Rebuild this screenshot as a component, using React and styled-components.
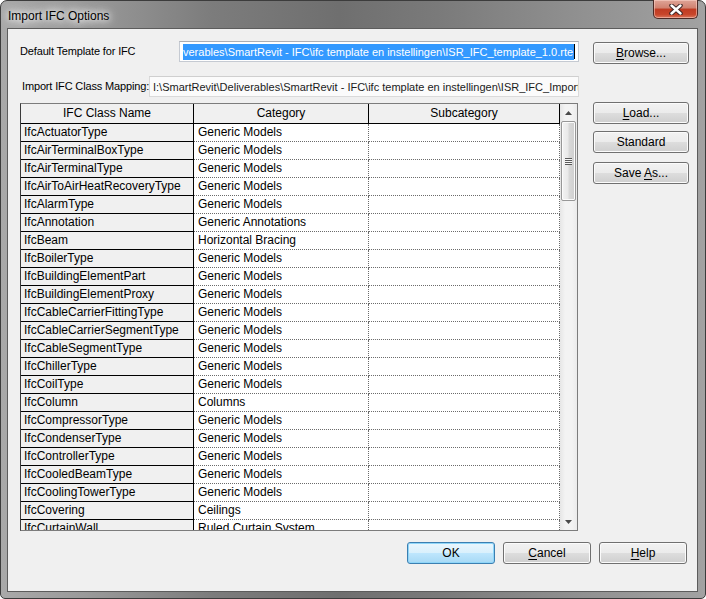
import React from 'react'
import styled, { createGlobalStyle } from 'styled-components'

const GlobalStyle = createGlobalStyle`
    body {
        margin: 0;
        background: #ffffff;
    }
`

const rows = [
    ['IfcActuatorType', 'Generic Models'],
    ['IfcAirTerminalBoxType', 'Generic Models'],
    ['IfcAirTerminalType', 'Generic Models'],
    ['IfcAirToAirHeatRecoveryType', 'Generic Models'],
    ['IfcAlarmType', 'Generic Models'],
    ['IfcAnnotation', 'Generic Annotations'],
    ['IfcBeam', 'Horizontal Bracing'],
    ['IfcBoilerType', 'Generic Models'],
    ['IfcBuildingElementPart', 'Generic Models'],
    ['IfcBuildingElementProxy', 'Generic Models'],
    ['IfcCableCarrierFittingType', 'Generic Models'],
    ['IfcCableCarrierSegmentType', 'Generic Models'],
    ['IfcCableSegmentType', 'Generic Models'],
    ['IfcChillerType', 'Generic Models'],
    ['IfcCoilType', 'Generic Models'],
    ['IfcColumn', 'Columns'],
    ['IfcCompressorType', 'Generic Models'],
    ['IfcCondenserType', 'Generic Models'],
    ['IfcControllerType', 'Generic Models'],
    ['IfcCooledBeamType', 'Generic Models'],
    ['IfcCoolingTowerType', 'Generic Models'],
    ['IfcCovering', 'Ceilings'],
    ['IfcCurtainWall', 'Ruled Curtain System'],
    ['IfcDamperType', 'Generic Models'],
]

// letter with access-key underline
const Key = ({ children }) => <u>{children}</u>

const CloseGlyph = () => (
    <svg width="14" height="11" viewBox="0 0 14 11">
        <path d="M2.5 1.5 L11.5 9.5 M11.5 1.5 L2.5 9.5" stroke="#3b2424" strokeWidth="4.4" strokeLinecap="round" />
        <path d="M2.5 1.5 L11.5 9.5 M11.5 1.5 L2.5 9.5" stroke="#ffffff" strokeWidth="2.4" strokeLinecap="round" />
    </svg>
)

const Arrow = ({ down }) => (
    <svg width="7" height="4" viewBox="0 0 7 4">
        <polygon points={down ? '0,0 7,0 3.5,4' : '0,4 7,4 3.5,0'} fill="#4a4a4a" />
    </svg>
)

const App = () => {
    return (
        <>
            <GlobalStyle />
            <StyledWindow>
                <TitleBar>
                    <TitleText>Import IFC Options</TitleText>
                    <CloseButton>
                        <CloseGlyph />
                    </CloseButton>
                </TitleBar>
                <Client>
                    <FieldRow>
                        <FieldLabel $w={159}>Default Template for IFC</FieldLabel>
                        <TextBox $w={400}>
                            <Selected>verables\SmartRevit - IFC\ifc template en instellingen\ISR_IFC_template_1.0.rte</Selected>
                            <Caret />
                        </TextBox>
                        <DialogButton $w={96} $ml={14} $mt={1}>
                            <span>
                                <Key>B</Key>rowse...
                            </span>
                        </DialogButton>
                    </FieldRow>

                    <FieldRow $mt={12}>
                        <FieldLabel $w={129} $pl={2}>
                            Import IFC Class Mapping:
                        </FieldLabel>
                        <TextBox $w={430} $readOnly>
                            I:\SmartRevit\Deliverables\SmartRevit - IFC\ifc template en instellingen\ISR_IFC_Import_Mapping.txt
                        </TextBox>
                    </FieldRow>

                    <BodyRow>
                        <TableFrame>
                            <Grid>
                                <HeaderRow>
                                    <HeaderCell>IFC Class Name</HeaderCell>
                                    <HeaderCell>Category</HeaderCell>
                                    <HeaderCell>Subcategory</HeaderCell>
                                </HeaderRow>
                                {rows.map(([name, cat]) => (
                                    <DataRow key={name}>
                                        <NameCell>{name}</NameCell>
                                        <ValueCell>{cat}</ValueCell>
                                        <ValueCell />
                                    </DataRow>
                                ))}
                            </Grid>
                            <ScrollBar>
                                <ScrollArrow>
                                    <Arrow />
                                </ScrollArrow>
                                <ScrollTrack>
                                    <Thumb>
                                        <Grip />
                                    </Thumb>
                                </ScrollTrack>
                                <ScrollArrow>
                                    <Arrow down />
                                </ScrollArrow>
                            </ScrollBar>
                        </TableFrame>
                        <SideButtons>
                            <DialogButton $w={96} $mt={-1}>
                                <span>
                                    <Key>L</Key>oad...
                                </span>
                            </DialogButton>
                            <DialogButton $w={96} $mt={7}>
                                <span>Standard</span>
                            </DialogButton>
                            <DialogButton $w={96} $mt={9}>
                                <span>
                                    Save <Key>A</Key>s...
                                </span>
                            </DialogButton>
                        </SideButtons>
                    </BodyRow>

                    <Footer>
                        <DialogButton $w={88} $primary>
                            <span>OK</span>
                        </DialogButton>
                        <DialogButton $w={88}>
                            <span>
                                <Key>C</Key>ancel
                            </span>
                        </DialogButton>
                        <DialogButton $w={88}>
                            <span>
                                <Key>H</Key>elp
                            </span>
                        </DialogButton>
                    </Footer>
                </Client>
            </StyledWindow>
        </>
    )
}

const StyledWindow = styled.div`
    width: 706px;
    height: 599px;
    box-sizing: border-box;
    display: flex;
    flex-direction: column;
    padding: 0 7px 6px 6px;
    border: 1px solid #3c3c3c;
    border-radius: 7px 7px 5px 5px;
    background: linear-gradient(
        to right,
        #a9a9a9 0%,
        #9a9a9a 12%,
        #7c7c7c 30%,
        #6f6f6f 48%,
        #7a7a7a 62%,
        #8e8e8e 80%,
        #a2a2a2 100%
    );
    font-family: 'Liberation Sans', Arial, sans-serif;
    font-size: 12px;
    color: #000;
`

const TitleBar = styled.div`
    height: 27px;
    display: flex;
    align-items: flex-start;
`

const TitleText = styled.div`
    margin-top: 7px;
    margin-left: 1px;
    line-height: 16px;
    font-size: 12px;
    color: #000;
    text-shadow: 0 0 6px #fff, 0 0 10px #fff, 0 0 14px rgba(255, 255, 255, 0.9);
`

const CloseButton = styled.div`
    margin-left: auto;
    margin-top: -1px;
    margin-right: 0;
    width: 45px;
    height: 19px;
    box-sizing: border-box;
    display: flex;
    align-items: center;
    justify-content: center;
    border: 1px solid #4b2a26;
    border-top: none;
    border-radius: 0 0 5px 5px;
    background: linear-gradient(#dfa497 0%, #d0816f 45%, #bf3b22 50%, #c8452a 80%, #d9765c 100%);
    box-shadow: inset 0 0 0 1px rgba(255, 220, 210, 0.5);
`

const Client = styled.div`
    flex: 1;
    display: flex;
    flex-direction: column;
    box-sizing: border-box;
    padding: 12px 8px 0 12px;
    background: #f0f0f0;
    border: 1px solid #5c5c5c;
`

const FieldRow = styled.div`
    display: flex;
    align-items: flex-start;
    margin-top: ${(p) => p.$mt || 0}px;
`

const FieldLabel = styled.div`
    width: ${(p) => p.$w}px;
    flex-shrink: 0;
    box-sizing: border-box;
    padding-left: ${(p) => p.$pl || 0}px;
    line-height: 21px;
    font-size: 11px;
    letter-spacing: -0.15px;
    white-space: nowrap;
`

const TextBox = styled.div`
    width: ${(p) => p.$w}px;
    height: 21px;
    flex-shrink: 0;
    box-sizing: border-box;
    display: flex;
    align-items: center;
    padding: 0 3px;
    overflow: hidden;
    white-space: nowrap;
    font-size: 11px;
    background: ${(p) => (p.$readOnly ? '#fbfbfb' : '#ffffff')};
    border: 1px solid ${(p) => (p.$readOnly ? '#dadada' : '#c5cad2')};
    border-top-color: ${(p) => (p.$readOnly ? '#cfcfcf' : '#abadb3')};
    color: ${(p) => (p.$readOnly ? '#1a1a1a' : '#000')};
`

const Selected = styled.span`
    background: #3399ff;
    color: #ffffff;
    line-height: 16px;
    padding-right: 1px;
`

const Caret = styled.span`
    width: 1px;
    height: 15px;
    background: #000;
    flex-shrink: 0;
`

const DialogButton = styled.div`
    width: ${(p) => p.$w}px;
    height: 22px;
    flex-shrink: 0;
    box-sizing: border-box;
    margin-top: ${(p) => p.$mt || 0}px;
    margin-left: ${(p) => p.$ml || 0}px;
    display: flex;
    align-items: center;
    justify-content: center;
    border-radius: 3px;
    border: 1px solid ${(p) => (p.$primary ? '#3c7fb1' : '#707070')};
    background: ${(p) =>
        p.$primary
            ? 'linear-gradient(#eaf6fd 0%, #d9f0fc 50%, #bee6fd 51%, #a7d9f5 100%)'
            : 'linear-gradient(#f2f2f2 0%, #ebebeb 50%, #dddddd 51%, #cfcfcf 100%)'};
    box-shadow: inset 0 0 0 1px ${(p) => (p.$primary ? '#8fd6f9' : '#fbfbfb')};
    color: #000;
    white-space: pre;
    u {
        text-decoration-thickness: 1px;
        text-underline-offset: 2px;
    }
`

const BodyRow = styled.div`
    display: flex;
    align-items: flex-start;
    margin-top: 6px;
`

const TableFrame = styled.div`
    width: 558px;
    height: 428px;
    flex-shrink: 0;
    box-sizing: border-box;
    display: flex;
    overflow: hidden;
    border: 1px solid #7c7c7c;
    border-left-color: #3a3a3a;
    background: #ffffff;
`

const Grid = styled.div`
    width: 539px;
    flex-shrink: 0;
    overflow: hidden;
`

const HeaderRow = styled.div`
    display: grid;
    grid-template-columns: 173px 175px 191px;
`

const DataRow = styled.div`
    display: grid;
    grid-template-columns: 173px 175px 191px;
`

const HeaderCell = styled.div`
    height: 20px;
    box-sizing: border-box;
    line-height: 19px;
    text-align: center;
    background: #f0f0f0;
    border-right: 1px solid #000;
    border-bottom: 1px solid #000;
`

const NameCell = styled.div`
    height: 18px;
    box-sizing: border-box;
    padding-left: 3px;
    line-height: 17px;
    white-space: nowrap;
    overflow: hidden;
    background: #f0f0f0;
    border-right: 1px solid #000;
    border-bottom: 1px solid #000;
`

const ValueCell = styled.div`
    height: 18px;
    box-sizing: border-box;
    padding-left: 4px;
    line-height: 17px;
    white-space: nowrap;
    overflow: hidden;
    background: #ffffff;
    border-right: 1px dotted #6a6a6a;
    border-bottom: 1px dotted #6a6a6a;
`

const ScrollBar = styled.div`
    width: 17px;
    flex-shrink: 0;
    display: flex;
    flex-direction: column;
    background: linear-gradient(to right, #e6e6e6, #f3f3f3 30%, #f3f3f3 70%, #ebebeb);
`

const ScrollArrow = styled.div`
    height: 17px;
    flex-shrink: 0;
    display: flex;
    align-items: center;
    justify-content: center;
`

const ScrollTrack = styled.div`
    flex: 1;
    padding: 0 1px;
`

const Thumb = styled.div`
    height: 80px;
    box-sizing: border-box;
    display: flex;
    align-items: center;
    justify-content: center;
    border: 1px solid #979797;
    border-radius: 2px;
    background: linear-gradient(to right, #f3f3f3 0%, #e9e9e9 45%, #d8d8d8 55%, #cfcfcf 100%);
    box-shadow: inset 0 0 0 1px #fbfbfb;
`

const Grip = styled.div`
    width: 7px;
    height: 7px;
    background: repeating-linear-gradient(#5a5a5a 0px, #5a5a5a 1px, #f6f6f6 1px, #f6f6f6 2px);
`

const SideButtons = styled.div`
    display: flex;
    flex-direction: column;
    margin-left: 15px;
`

const Footer = styled.div`
    display: flex;
    justify-content: flex-end;
    gap: 8px;
    margin-top: 11px;
    margin-right: 2px;
`

export default App
